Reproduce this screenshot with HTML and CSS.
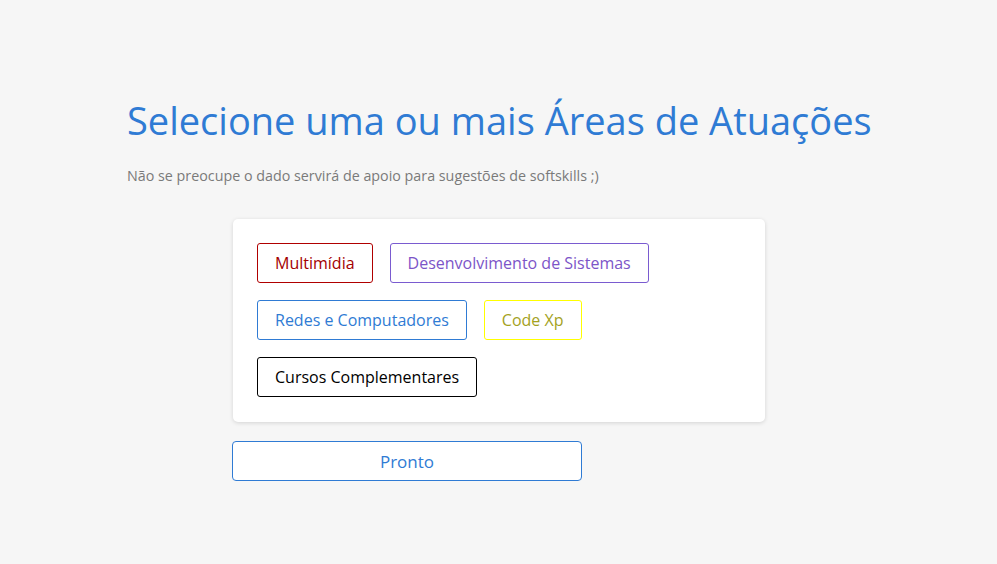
FILE: index.html
```html
<!DOCTYPE html>
<html lang="pt">
<head>
<meta charset="utf-8">
<link rel="stylesheet" href="styles.css">
</head>
<body>
<main class="page">
  <h1 class="title">Selecione uma ou mais Áreas de Atuações</h1>
  <p class="subtitle">Não se preocupe o dado servirá de apoio para sugestões de softskills ;)</p>
  <div class="panel">
    <div class="card">
      <button class="chip chip-red">Multimídia</button>
      <button class="chip chip-purple">Desenvolvimento de Sistemas</button>
      <button class="chip chip-blue">Redes e Computadores</button>
      <button class="chip chip-yellow">Code Xp</button>
      <button class="chip chip-black">Cursos Complementares</button>
    </div>
    <button class="done">Pronto</button>
  </div>
</main>
</body>
</html>
```

FILE: styles.css
```css
html, body {
  margin: 0;
  padding: 0;
  background: #f6f6f6;
  font-family: "Open Sans", "Noto Sans", sans-serif;
}
.page {
  padding: 94px 0 0 127px;
}
.title {
  margin: 0;
  font-weight: 400;
  font-size: 38px;
  line-height: 52px;
  color: #2f7bd4;
}
.subtitle {
  margin: 20px 0 0;
  font-size: 14.3px;
  line-height: 20px;
  color: #7a7a7a;
}
.panel {
  margin: 33px 0 0 105px;
  width: 533px;
}
.card {
  margin-left: 1px;
  background: #fff;
  border-radius: 5px;
  box-shadow: 0 1px 4px rgba(0,0,0,0.14);
  padding: 24px 24px 25px 24px;
  display: flex;
  flex-wrap: wrap;
  gap: 17px 17px;
}
.chip {
  font-family: inherit;
  font-size: 16px;
  height: 40px;
  padding: 0 17px;
  background: #fff;
  border: 1px solid;
  border-radius: 3px;
  cursor: pointer;
}
.chip-red { color: #a40000; border-color: #b00000; }
.chip-purple { color: #7c55c8; border-color: #7a5bd0; }
.chip-blue { color: #2f7bd4; border-color: #2f7bd4; }
.chip-yellow { color: #a4a21e; border-color: #ffff00; }
.chip-black { color: #000; border-color: #000; }
.done {
  margin-top: 19px;
  width: 350px;
  height: 40px;
  background: #fff;
  border: 1px solid #2f7bd4;
  border-radius: 4px;
  color: #2f7bd4;
  font-family: inherit;
  font-size: 17px;
}
```
